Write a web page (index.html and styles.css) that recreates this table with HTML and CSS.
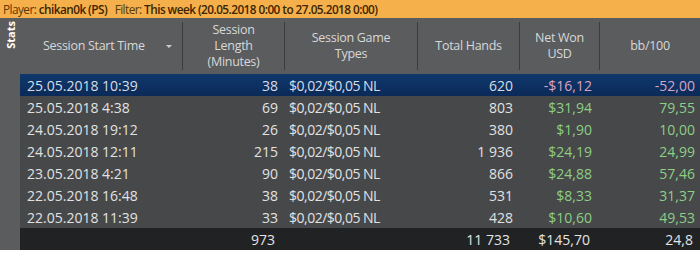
FILE: index.html
```html
<!DOCTYPE html>
<html>
<head>
<meta charset="utf-8">
<link rel="stylesheet" href="styles.css">
</head>
<body>
<div class="titlebar">
  <span class="lbl">Player:</span> <b>chikan0k (PS)</b>
  <span class="lbl gap">Filter:</span> <b>This week (20.05.2018 0:00 to 27.05.2018 0:00)</b>
</div>
<div class="main">
  <div class="sidebar"><div class="tab"><span>Stats</span></div></div>
  <div class="grid">
    <div class="row head">
      <div class="c c1 hc"><span class="ht">Session Start Time</span><span class="arrow"></span></div>
      <div class="c c2 hc">Session<br>Length<br>(Minutes)</div>
      <div class="c c3 hc">Session Game<br>Types</div>
      <div class="c c4 hc">Total Hands</div>
      <div class="c c5 hc">Net Won<br>USD</div>
      <div class="c c6 hc last">bb/100</div>
    </div>
    <div class="row sel">
      <div class="c c1">25.05.2018 10:39</div><div class="c c2">38</div><div class="c c3">$0,02/$0,05 NL</div><div class="c c4">620</div><div class="c c5 neg">-$16,12</div><div class="c c6 neg">-52,00</div>
    </div>
    <div class="row">
      <div class="c c1">25.05.2018 4:38</div><div class="c c2">69</div><div class="c c3">$0,02/$0,05 NL</div><div class="c c4">803</div><div class="c c5 pos">$31,94</div><div class="c c6 pos">79,55</div>
    </div>
    <div class="row">
      <div class="c c1">24.05.2018 19:12</div><div class="c c2">26</div><div class="c c3">$0,02/$0,05 NL</div><div class="c c4">380</div><div class="c c5 pos">$1,90</div><div class="c c6 pos">10,00</div>
    </div>
    <div class="row">
      <div class="c c1">24.05.2018 12:11</div><div class="c c2">215</div><div class="c c3">$0,02/$0,05 NL</div><div class="c c4">1 936</div><div class="c c5 pos">$24,19</div><div class="c c6 pos">24,99</div>
    </div>
    <div class="row">
      <div class="c c1">23.05.2018 4:21</div><div class="c c2">90</div><div class="c c3">$0,02/$0,05 NL</div><div class="c c4">866</div><div class="c c5 pos">$24,88</div><div class="c c6 pos">57,46</div>
    </div>
    <div class="row">
      <div class="c c1">22.05.2018 16:48</div><div class="c c2">38</div><div class="c c3">$0,02/$0,05 NL</div><div class="c c4">531</div><div class="c c5 pos">$8,33</div><div class="c c6 pos">31,37</div>
    </div>
    <div class="row">
      <div class="c c1">22.05.2018 11:39</div><div class="c c2">33</div><div class="c c3">$0,02/$0,05 NL</div><div class="c c4">428</div><div class="c c5 pos">$10,60</div><div class="c c6 pos">49,53</div>
    </div>
    <div class="row total">
      <div class="c c1"></div><div class="c c2">973</div><div class="c c3"></div><div class="c c4">11 733</div><div class="c c5">$145,70</div><div class="c c6">24,8</div>
    </div>
  </div>
</div>
</body>
</html>
```
FILE: styles.css
```css
html, body {
  margin: 0;
  padding: 0;
  background: #ffffff;
}
body {
  font-family: "Open Sans", "Noto Sans", sans-serif;
  width: 700px;
}
.titlebar {
  height: 18px;
  background: #f5b04c;
  color: #3d2500;
  font-size: 11.8px;
  line-height: 18px;
  padding-left: 3px;
  white-space: nowrap;
  letter-spacing: -0.55px;
  overflow: hidden;
}
.titlebar b {
  font-weight: 600;
}
.titlebar .lbl {
  color: #5a3a08;
}
.titlebar .gap {
  margin-left: 5px;
}
.main {
  display: flex;
}
.sidebar {
  width: 20px;
  background: #5b5c5e;
  padding-top: 1px;
  box-sizing: border-box;
}
.tab {
  margin-left: 4px;
  width: 14px;
  height: 31px;
  background: #0e0e0e;
  display: flex;
  align-items: center;
  justify-content: center;
}
.tab span {
  writing-mode: vertical-rl;
  transform: rotate(180deg);
  color: #ffffff;
  font-size: 11px;
  font-weight: bold;
  line-height: 14px;
}
.grid {
  flex: 1;
  background: #46484a;
  font-size: 14px;
  color: #e2e2e2;
}
.row {
  display: grid;
  grid-template-columns: 163px 102px 133px 102px 80px 100px;
  height: 22px;
  align-items: center;
}
.c {
  white-space: nowrap;
}
.c1 { padding-left: 7px; }
.c2 { text-align: right; padding-right: 7px; }
.c3 { padding-left: 4px; letter-spacing: -0.5px; }
.c4 { text-align: right; padding-right: 7px; }
.c5 { text-align: right; padding-right: 8px; }
.c6 { text-align: right; padding-right: 5px; }
.head {
  height: 56px;
  background: #5b5c5e;
  margin-left: -20px;
  padding-left: 20px;
  align-items: stretch;
  color: #d8d8d8;
  font-size: 12.5px;
  line-height: 16px;
  letter-spacing: -0.3px;
}
.hc {
  text-align: center;
  padding: 0;
  display: flex;
  align-items: center;
  justify-content: center;
  margin: 4px 0;
  border-right: 1px solid #3b3c3e;
}
.head .c3 {
  letter-spacing: -0.3px;
}
.hc.last {
  border-right: none;
}
.c1.hc {
  position: relative;
  justify-content: flex-start;
  padding-left: 23px;
}
.arrow {
  position: absolute;
  right: 10px;
  top: 23px;
  width: 0;
  height: 0;
  border-left: 3.5px solid transparent;
  border-right: 3.5px solid transparent;
  border-top: 3.5px solid #cfcfcf;
}
.sel {
  background: linear-gradient(#0f386c, #0b2a58);
  color: #d8dce4;
}
.pos { color: #8dcf83; }
.sel .neg { color: #d9a3c2; }
.total {
  background: #202224;
  color: #e4e4e4;
}
.total .c2 { padding-right: 10px; }
.total .c4 { padding-right: 10px; }
.total .c5 { padding-right: 10px; }
.total .c6 { padding-right: 7px; }
```
